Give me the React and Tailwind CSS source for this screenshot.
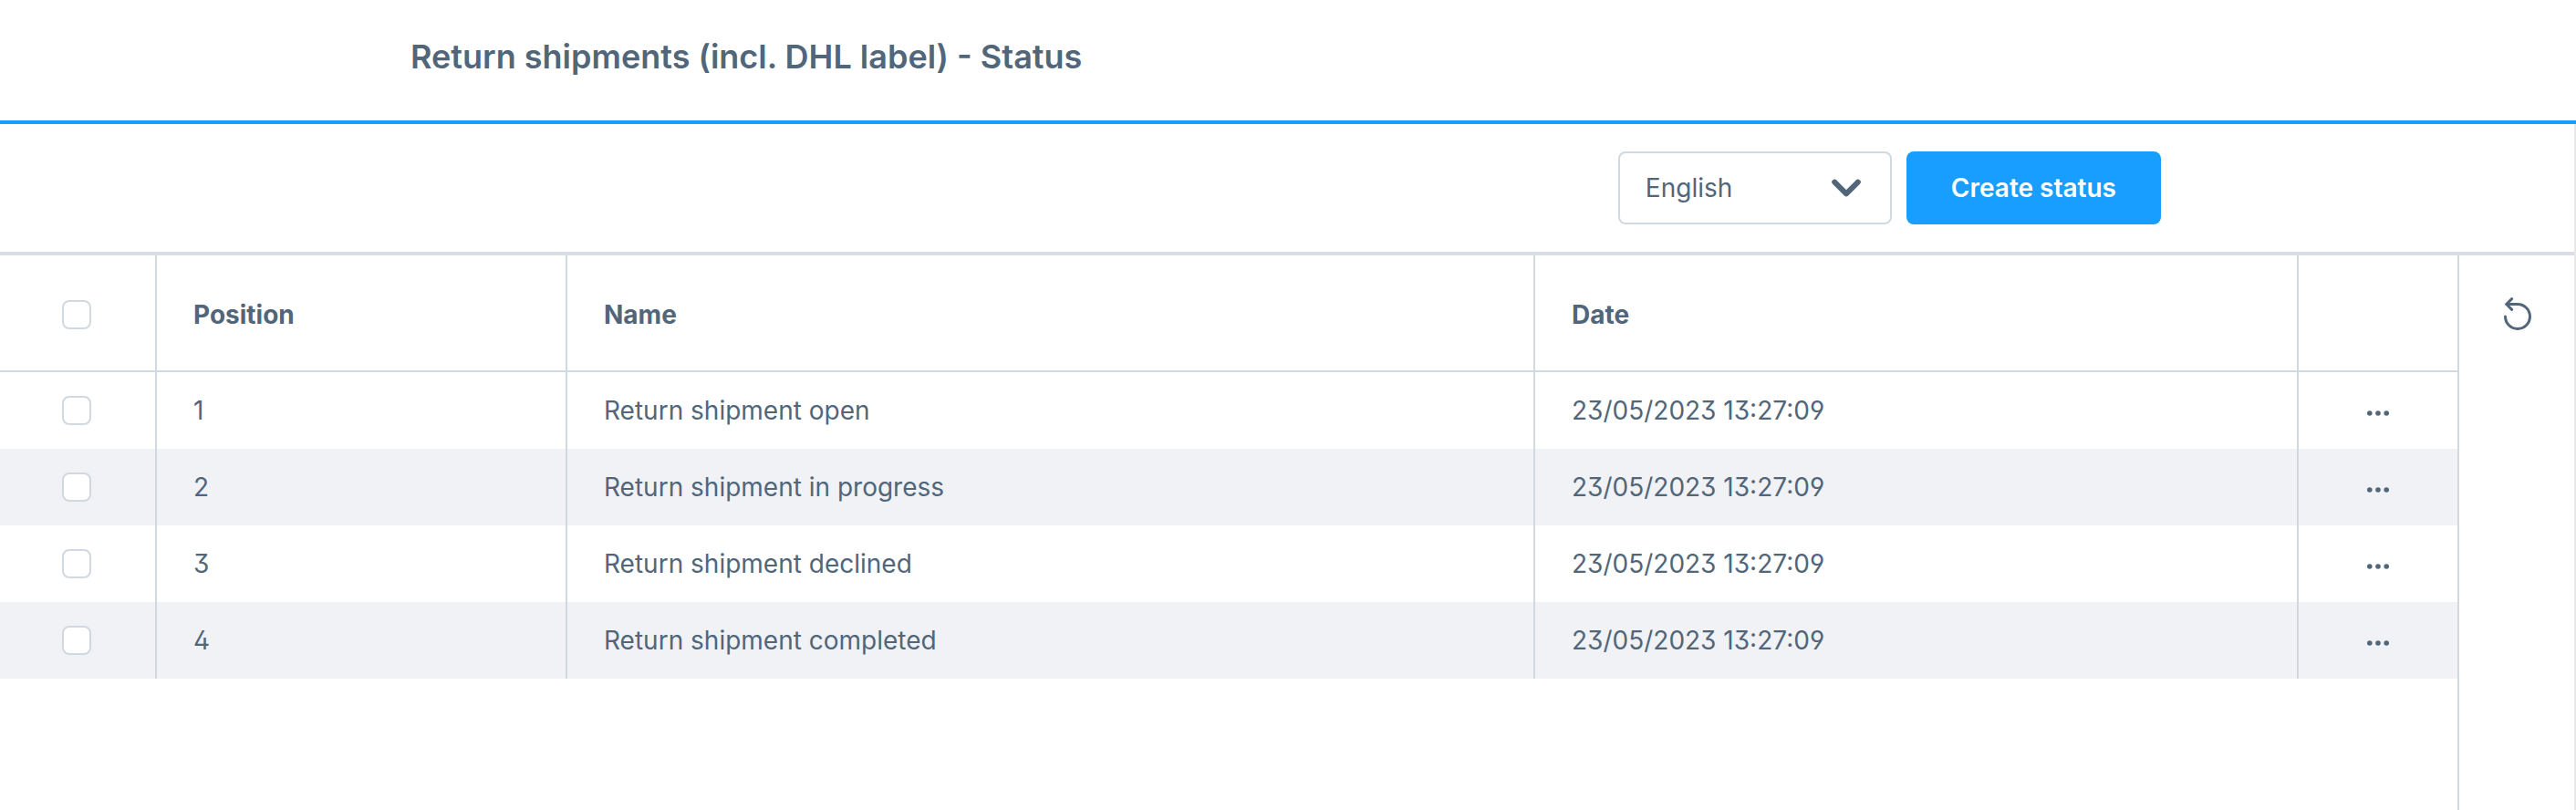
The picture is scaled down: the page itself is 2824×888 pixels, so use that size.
import React from "react";

const rows = [
  { position: 1, name: "Return shipment open", date: "23/05/2023 13:27:09" },
  { position: 2, name: "Return shipment in progress", date: "23/05/2023 13:27:09" },
  { position: 3, name: "Return shipment declined", date: "23/05/2023 13:27:09" },
  { position: 4, name: "Return shipment completed", date: "23/05/2023 13:27:09" },
];

function Checkbox({ label }) {
  return (
    <input
      type="checkbox"
      aria-label={label}
      className="block w-8 h-8 appearance-none rounded-lg border-2 border-[#d1d9e0] bg-white checked:bg-[#189eff]"
    />
  );
}

function LanguageSelect() {
  return (
    <div className="grid w-[300px] items-center">
      <select
        aria-label="Language"
        className="col-start-1 row-start-1 w-full h-20 pl-7 pr-20 appearance-none rounded-lg border-2 border-[#d1d9e0] bg-white"
      >
        <option>English</option>
        <option>Deutsch</option>
      </select>
      <svg
        viewBox="0 0 32 20"
        className="col-start-1 row-start-1 justify-self-end mr-[34px] w-8 h-5 pointer-events-none"
        fill="none"
        stroke="currentColor"
        strokeWidth="6"
        strokeLinecap="round"
        strokeLinejoin="round"
      >
        <path d="M3.2 3.6 16 16.4 28.8 3.6" />
      </svg>
    </div>
  );
}

function ResetIcon() {
  return (
    <svg
      viewBox="0 0 32 36"
      className="w-8 h-9"
      fill="none"
      stroke="currentColor"
      strokeWidth="3"
      strokeLinecap="round"
      strokeLinejoin="round"
    >
      <path d="M2.5 21A13.5 13.5 0 1 0 16 7.5H4" />
      <path d="M9.6 1.6 3.7 7.5l5.9 5.9" />
    </svg>
  );
}

function DotsIcon() {
  return (
    <svg viewBox="0 0 24 6" className="w-6 h-[6px]" fill="currentColor">
      <circle cx="2.8" cy="3" r="2.8" />
      <circle cx="12" cy="3" r="2.8" />
      <circle cx="21.2" cy="3" r="2.8" />
    </svg>
  );
}

export default function App() {
  return (
    <div className="flex flex-col min-h-screen bg-white text-[#52667a] text-[28px] leading-10 font-['Inter',sans-serif]">
      <header className="pt-10 pb-12 pl-[450px] border-b-4 border-[#189eff]">
        <h1 className="text-4xl leading-11 font-semibold">Return shipments (incl. DHL label) - Status</h1>
      </header>

      <div className="flex flex-col grow border-r-2 border-[#e8e8e8]">
        <div className="flex justify-end gap-4 py-[30px] pr-[453px] border-b-4 border-[#d8dde6]">
          <LanguageSelect />
          <button type="button" className="h-20 px-[49px] rounded-lg bg-[#189eff] text-white font-semibold">
            Create status
          </button>
        </div>

        <div className="flex grow items-stretch">
          <main className="grow">
            <table className="w-full table-fixed border-separate border-spacing-0 text-left [font-feature-settings:'ss01','cv09']">
              <colgroup>
                <col className="w-[172px]" />
                <col className="w-[450px]" />
                <col />
                <col className="w-[837px]" />
                <col className="w-[174px]" />
              </colgroup>
              <thead>
                <tr className="h-32 *:pt-[3px] *:border-[#d1d9e0] *:border-b-2">
                  <th className="pl-[68px] border-r-2"><Checkbox label="Select all" /></th>
                  <th className="px-10 border-r-2 font-bold">Position</th>
                  <th className="px-10 border-r-2 font-bold">Name</th>
                  <th className="px-10 border-r-2 font-bold">Date</th>
                  <td></td>
                </tr>
              </thead>
              <tbody>
                {rows.map((row) => (
                  <tr key={row.position} className="h-[84px] even:bg-[#f0f2f5] *:border-[#d1d9e0]">
                    <td className="pl-[68px] border-r-2"><Checkbox label={`Select ${row.name}`} /></td>
                    <td className="px-10 border-r-2">{row.position}</td>
                    <td className="px-10 border-r-2">{row.name}</td>
                    <td className="px-10 border-r-2">{row.date}</td>
                    <td>
                      <button type="button" aria-label={`Actions for ${row.name}`} className="flex w-full pt-[6px] justify-center">
                        <DotsIcon />
                      </button>
                    </td>
                  </tr>
                ))}
              </tbody>
            </table>
          </main>

          <aside className="w-32 shrink-0 border-l-2 border-[#d1d9e0]">
            <button type="button" aria-label="Refresh" className="flex w-full h-32 pl-[2px] items-center justify-center">
              <ResetIcon />
            </button>
          </aside>
        </div>
      </div>
    </div>
  );
}
